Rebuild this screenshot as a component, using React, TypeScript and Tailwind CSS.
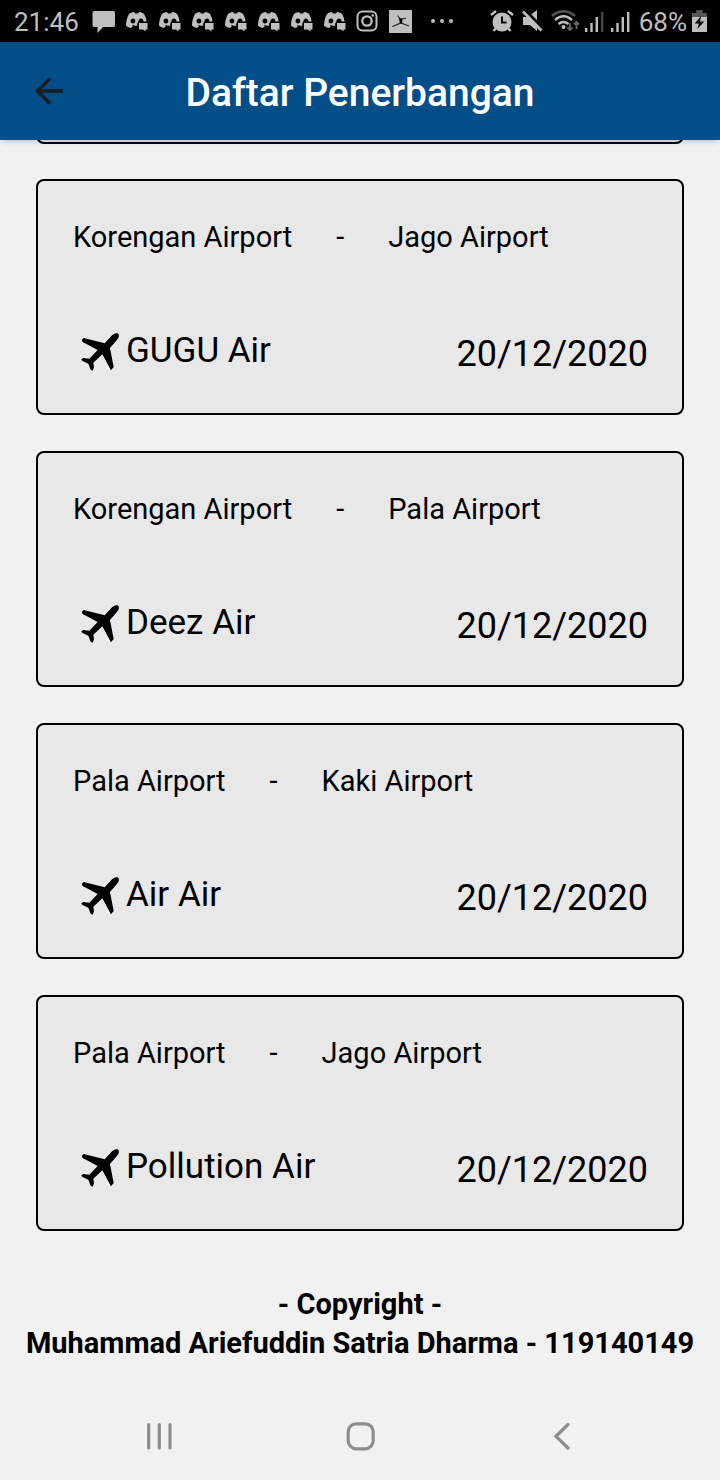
import type { ReactNode } from "react";

type Flight = { from: string; to: string; airline: string; date: string };

const flights: Flight[] = [
  { from: "Korengan Airport", to: "Jago Airport", airline: "GUGU Air", date: "20/12/2020" },
  { from: "Korengan Airport", to: "Pala Airport", airline: "Deez Air", date: "20/12/2020" },
  { from: "Pala Airport", to: "Kaki Airport", airline: "Air Air", date: "20/12/2020" },
  { from: "Pala Airport", to: "Jago Airport", airline: "Pollution Air", date: "20/12/2020" },
];

function DiscordIcon() {
  return (
    <svg width="24" height="22" viewBox="0 0 24 22" fill="#bfbfbf" aria-hidden="true">
      <path
        fillRule="evenodd"
        d="M4 3C6 1.600 7.500 1.200 9 1L10 2.500H13L14 1C16.500 1.300 18 2 19 3C20.500 5.500 21.500 8 21.500 10.500H18.500C18.500 8.500 17.500 7.500 16 7.500C14.500 7.500 13.800 8.500 13.500 10L12 13L12.500 14.500C10.500 15.300 8.500 14.500 7.500 13.800L7.500 16L5.500 17C3.500 16.500 2 15.500 1 14.500C1 10.500 2 6.500 4 3ZM8 7.500C6.500 7.500 5.500 8.500 5.500 10C5.500 11.500 6.500 12.500 8 12.500C9.500 12.500 10.300 11.500 10.300 10C10.300 8.500 9.500 7.500 8 7.500Z"
      />
      <path d="M14 12H22.500V18.500H20.500V20.500L18 18.500H14Z" />
    </svg>
  );
}

function StatusBar() {
  return (
    <div className="flex h-[42px] items-center justify-between bg-black pr-[13px] pl-[14px] text-[26px] leading-[30px] text-[#bfbfbf]">
      <div className="flex items-center">
        <span className="w-[78px] pt-[2px]">21:46</span>
        <svg width="24" height="24" viewBox="0 0 24 24" fill="#bfbfbf" aria-hidden="true">
          <path d="M2.500 2H21a2 2 0 0 1 2 2V16a2 2 0 0 1-2 2H11L5.500 24V18H2.500a2 2 0 0 1-2-2V4a2 2 0 0 1 2-2Z" />
        </svg>
        <div className="ml-[9px] flex gap-[9px] pt-[2px]">
          {Array.from({ length: 7 }, (_, i) => (
            <DiscordIcon key={i} />
          ))}
        </div>
        <svg className="ml-[8px]" width="24" height="24" viewBox="0 0 24 24" fill="none" stroke="#bfbfbf" strokeWidth="2" aria-hidden="true">
          <rect x="2.500" y="2.500" width="19" height="19" rx="5" />
          <circle cx="12" cy="12" r="4.700" strokeWidth="2.300" />
          <circle cx="17.700" cy="6.500" r="1.200" fill="#bfbfbf" stroke="none" />
        </svg>
        <svg className="ml-[10px]" width="24" height="24" viewBox="0 0 24 24" aria-hidden="true">
          <rect width="23" height="23" y="1" fill="#bfbfbf" />
          <path d="M8.500 6.500L11.500 10.500L17 9M11.500 10.500V14L3.500 17.500M12 14L20 17" fill="none" stroke="#222" strokeWidth="1.200" />
          <path d="M10 9.500H13.500L13 14.500H11Z" />
        </svg>
        <svg className="ml-[17px]" width="26" height="24" viewBox="0 0 26 24" fill="#bfbfbf" aria-hidden="true">
          <circle cx="3" cy="12" r="2" />
          <circle cx="12" cy="12" r="2" />
          <circle cx="21" cy="12" r="2" />
        </svg>
      </div>
      <div className="flex items-center">
        <svg width="24" height="24" viewBox="0 0 24 24" fill="none" stroke="#bfbfbf" strokeWidth="2.400" aria-hidden="true">
          <circle cx="12" cy="13" r="9.500" fill="#bfbfbf" stroke="none" />
          <path d="M1 6L6 2M23 6L18 2M6 19L3.500 22M18 19L20.500 22" />
          <path d="M12 7.500V13.500H16.500" stroke="#000" strokeWidth="2" />
        </svg>
        <svg className="ml-[8px]" width="22" height="24" viewBox="0 0 22 24" aria-hidden="true">
          <path d="M1 8H6L15 1V22L8 16H1Z" fill="#bfbfbf" />
          <path d="M1.500 0.500L21 20" stroke="#000" strokeWidth="4" />
          <path d="M1 2.500L19.500 21.500" stroke="#bfbfbf" strokeWidth="2.600" />
        </svg>
        <svg className="ml-[7px]" width="29" height="24" viewBox="0 0 29 24" fill="none" strokeWidth="2.400" aria-hidden="true">
          <path d="M1 7Q12.500-2.500 24 7" stroke="#555" />
          <path d="M4 11Q12.500 3.500 21 11M7.500 15Q12.500 11 17.500 15" stroke="#bfbfbf" />
          <circle cx="12.500" cy="18" r="2" fill="#bfbfbf" />
          <path d="M19 14V21M16.500 18.500L19 21L21.500 18.500M25.500 20V13M23 15.500L25.500 13L28 15.500" stroke="#666" strokeWidth="1.800" />
        </svg>
        <div className="ml-[5px] flex gap-[6px]">
          <Signal last="#444" />
          <Signal last="#bfbfbf" />
        </div>
        <span className="ml-[8px] pt-[2px]">68%</span>
        <svg className="ml-[5px]" width="15" height="24" viewBox="0 0 14 24" preserveAspectRatio="none" aria-hidden="true">
          <path d="M4 1H10V4H14V8H0V4H4Z" fill="#555" />
          <path d="M0 8H14V23H0Z" fill="#bfbfbf" />
          <path d="M8.500 7L2.500 14.500H6.500L5 20L11.500 12.500H7.500Z" fill="#000" />
        </svg>
      </div>
    </div>
  );
}

function Signal({ last }: { last: string }) {
  return (
    <svg width="20" height="24" viewBox="0 0 20 24" fill="#bfbfbf" aria-hidden="true">
      <rect x="0" y="19" width="2.400" height="4" />
      <rect x="5.300" y="14" width="2.400" height="9" />
      <rect x="10.600" y="8" width="2.400" height="15" />
      <rect x="16" y="3" width="2.400" height="20" fill={last} />
    </svg>
  );
}

function PlaneIcon() {
  return (
    <svg className="mr-[2px] ml-[3px] shrink-0" width="48" height="48" viewBox="0 0 144 144" aria-hidden="true">
      <path d="M17 36L23 30L86 46L109 21Q116 14 124 16Q132 20 127 30Q125 34 102 60L113 117L105 127L79 79L52 104L54 119L49 128L44 125L37 107L18 98L16 94L22 90L40 92L65 66L20 42Z" />
    </svg>
  );
}

function FlightCard({ flight }: { flight: Flight }) {
  return (
    <li className="flex h-[236px] flex-col justify-between rounded-lg border-2 border-black bg-[#e8e8e8] pt-[38px] pr-[34px] pb-[37px] pl-[35px]">
      <p className="flex text-[29px] leading-[36px]">
        <span>{flight.from}</span>
        <span className="mx-[44px]">-</span>
        <span>{flight.to}</span>
      </p>
      <div className="flex items-center justify-between leading-[40px]">
        <p className="flex items-center text-[35px]">
          <PlaneIcon />
          <span className="pb-[2px]">{flight.airline}</span>
        </p>
        <p className="pt-1 text-[36px]">{flight.date}</p>
      </div>
    </li>
  );
}

function NavButton({ label, children }: { label: string; children: ReactNode }) {
  return (
    <button type="button" aria-label={label} className="flex w-[202px] justify-center">
      <svg width="32" height="32" viewBox="0 0 32 32" fill="none" stroke="#8c8c8c" strokeWidth="3.200" strokeLinecap="round" aria-hidden="true">
        {children}
      </svg>
    </button>
  );
}

export default function App() {
  return (
    <div className="min-h-screen bg-[#f1f1f1] font-['Roboto',sans-serif] text-black">
      <StatusBar />
      <header className="relative grid h-[98px] grid-cols-[1fr_auto_1fr] items-center bg-[#024e88] shadow-md">
        <button type="button" aria-label="Kembali" className="ml-[33px] w-8">
          <svg width="32" height="32" viewBox="0 0 32 32" fill="none" stroke="#1c1c1e" strokeWidth="3.400" aria-hidden="true">
            <path d="M30 16H4.500M17 3.500L4.500 16L17 28.500" />
          </svg>
        </button>
        <h1 className="pt-1 text-[39px] leading-[48px] font-medium text-white">Daftar Penerbangan</h1>
      </header>
      <main>
        <div className="mx-9 h-[4px] overflow-hidden">
          <div className="-mt-4 h-5 rounded-b-lg border-2 border-black bg-[#e8e8e8]" />
        </div>
        <ul className="mx-9 mt-[35px] flex flex-col gap-[36px]">
          {flights.map((flight) => (
            <FlightCard key={flight.airline} flight={flight} />
          ))}
        </ul>
      </main>
      <footer className="mt-[54px] text-center text-[29px] leading-[39px] font-bold">
        <p>- Copyright -</p>
        <p>Muhammad Ariefuddin Satria Dharma - 119140149</p>
      </footer>
      <nav className="mt-[57px] flex justify-center pb-6">
        <NavButton label="Aplikasi terbaru">
          <path d="M6.700 4.500V28M17.300 4.500V28M28 4.500V28" />
        </NavButton>
        <NavButton label="Beranda">
          <rect x="4.200" y="3.800" width="25" height="25" rx="8" />
        </NavButton>
        <NavButton label="Kembali ke layar sebelumnya">
          <path d="M22 4.500L10 16.300L22 28" />
        </NavButton>
      </nav>
    </div>
  );
}
